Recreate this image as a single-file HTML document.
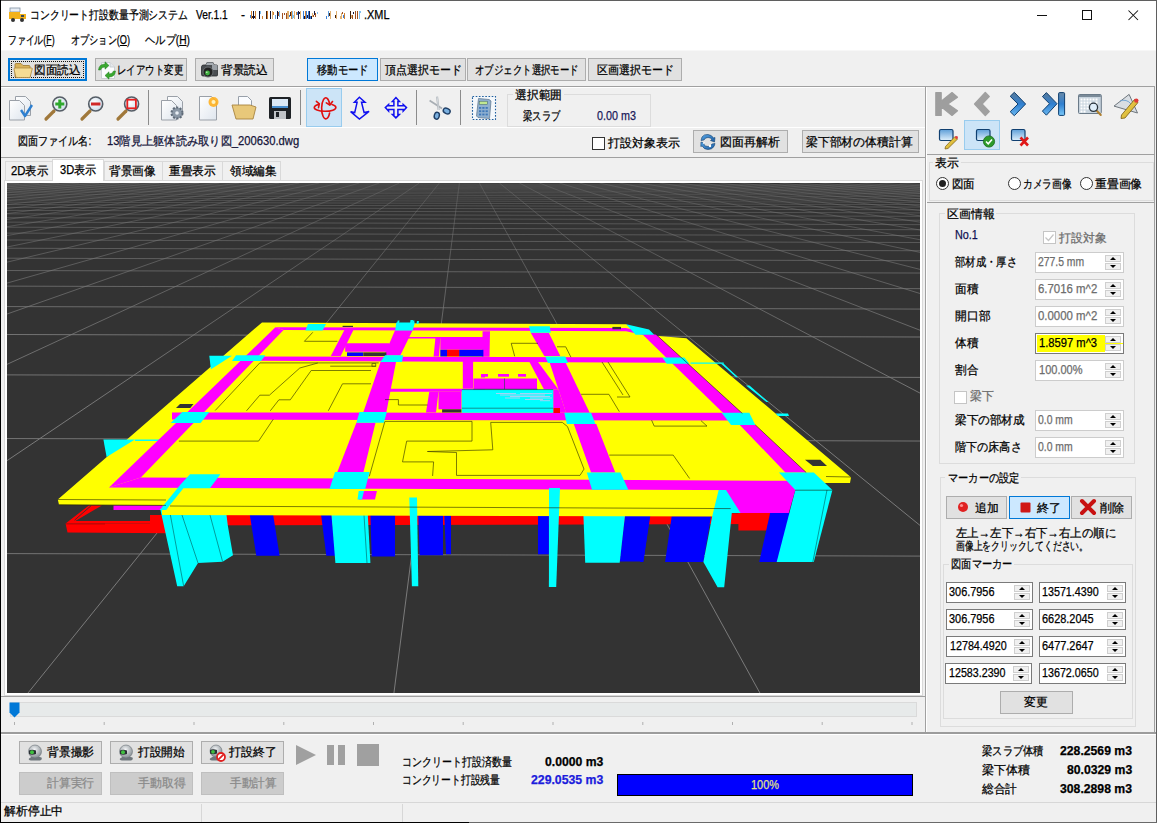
<!DOCTYPE html>
<html><head><meta charset="utf-8">
<style>
*{box-sizing:border-box}
html,body{margin:0;padding:0}
body{width:1157px;height:823px;overflow:hidden;position:relative;background:#f0f0f0;font-family:"Liberation Sans",sans-serif;font-size:12px;color:#000}
.a{position:absolute}
.t{position:absolute;z-index:3;white-space:nowrap;line-height:14px;font-size:12px;-webkit-text-stroke-width:0.25px}
.btn{position:absolute;background:#e1e1e1;border:1px solid #adadad;display:flex;align-items:center;justify-content:center;white-space:nowrap;font-size:12px}
.hl{background:#cce8ff;border-color:#0078d7}
.dis{background:#cccccc;border-color:#bfbfbf;color:#838383}
.inp{position:absolute;background:#fff;border:1px solid #7a7a7a;height:21px}
.inp.d{border-color:#cccccc;color:#6d6d6d}
.inp span{position:absolute;left:3px;top:3px;white-space:nowrap;font-size:12px;line-height:14px}
.sp{position:absolute;right:2px;top:2px;width:16px;height:15px;}
.sp i{position:absolute;left:0;width:16px;height:7px;background:#f0f0f0;border:1px solid #cfcfcf}
.sp i:nth-of-type(1){top:0}.sp i:nth-of-type(2){top:8px}
.sp b{position:absolute;left:5px;width:0;height:0;border-left:3px solid transparent;border-right:3px solid transparent}
.sp b.u{top:2px;border-bottom:3px solid #000}
.sp b.dn{top:10px;border-top:3px solid #000}
.grp{position:absolute;border:1px solid #dcdcdc}
.grp .gt{position:absolute;top:-8px;left:6px;background:#f0f0f0;padding:0 1px;white-space:nowrap;line-height:14px}
.sep{position:absolute;width:1px;background:#8c8c8c}
.tab{position:absolute;top:161px;height:19px;background:#f0f0f0;border:1px solid #d9d9d9;border-bottom:none;display:flex;align-items:center;justify-content:center;font-size:12px}
.radio{position:absolute;width:13px;height:13px;border-radius:50%;border:1px solid #333;background:#fff}
.chk{position:absolute;width:13px;height:13px;border:1px solid #333;background:#fff}
</style></head><body>
<!-- window frame -->
<div class="a" style="left:0;top:0;width:1157px;height:50px;background:#fff"></div>
<div class="a" style="left:0;top:0;width:1157px;height:1px;background:#5f5f5f;z-index:5"></div>
<div class="a" style="left:0;top:0;width:1px;height:823px;background:#000;z-index:5"></div>
<div class="a" style="left:1156px;top:0;width:1px;height:823px;background:#5f5f5f;z-index:5"></div>
<div class="a" style="left:0;top:822px;width:469px;height:1px;background:#000;z-index:5"></div>
<div class="a" style="left:469px;top:822px;width:688px;height:1px;background:#6a6a6a;z-index:5"></div>

<!-- title bar -->
<svg class="a" style="left:9px;top:7px" width="18" height="16" viewBox="0 0 18 16">
<rect x="1" y="1" width="10" height="4" fill="#e8eef5" stroke="#7f8fa0" stroke-width="0.8"/>
<rect x="0" y="5" width="11" height="7" fill="#f3b21a"/>
<rect x="11" y="7" width="6" height="5" fill="#f3b21a"/>
<rect x="12" y="8" width="3" height="2" fill="#3b4a5a"/>
<circle cx="4" cy="13" r="2" fill="#333"/><circle cx="13" cy="13" r="2" fill="#333"/>
</svg>
<div class="a" style="left:250px;top:9px;width:113px;height:10px;"><svg width="113" height="10"><rect x="0" y="5" width="1" height="3" fill="#3a7fd8"/><rect x="1" y="1" width="1" height="8" fill="#d08030"/><rect x="2" y="6" width="1" height="2" fill="#402010"/><rect x="3" y="1" width="1" height="8" fill="#101030"/><rect x="4" y="6" width="1" height="2" fill="#101030"/><rect x="5" y="1" width="1" height="8" fill="#d08030"/><rect x="9" y="1" width="1" height="8" fill="#101030"/><rect x="10" y="1" width="1" height="3" fill="#80c0f0"/><rect x="12" y="6" width="1" height="3" fill="#d08030"/><rect x="16" y="1" width="1" height="8" fill="#402010"/><rect x="17" y="1" width="1" height="8" fill="#d08030"/><rect x="20" y="1" width="1" height="8" fill="#101030"/><rect x="22" y="1" width="1" height="8" fill="#e0b070"/><rect x="23" y="2" width="1" height="3" fill="#d08030"/><rect x="25" y="5" width="1" height="4" fill="#60a0e0"/><rect x="27" y="1" width="1" height="8" fill="#101030"/><rect x="28" y="2" width="1" height="4" fill="#a05020"/><rect x="29" y="1" width="1" height="6" fill="#80c0f0"/><rect x="32" y="3" width="1" height="6" fill="#a05020"/><rect x="34" y="3" width="1" height="2" fill="#a05020"/><rect x="36" y="3" width="1" height="6" fill="#a05020"/><rect x="37" y="1" width="1" height="8" fill="#e0b070"/><rect x="38" y="1" width="1" height="8" fill="#e0b070"/><rect x="39" y="5" width="1" height="2" fill="#3a7fd8"/><rect x="40" y="2" width="1" height="4" fill="#402010"/><rect x="41" y="1" width="1" height="8" fill="#d08030"/><rect x="42" y="1" width="1" height="8" fill="#80c0f0"/><rect x="43" y="5" width="1" height="3" fill="#80c0f0"/><rect x="44" y="1" width="1" height="8" fill="#e0b070"/><rect x="46" y="2" width="1" height="3" fill="#d08030"/><rect x="47" y="2" width="1" height="3" fill="#3a7fd8"/><rect x="48" y="1" width="1" height="8" fill="#1a1a40"/><rect x="49" y="2" width="1" height="2" fill="#101030"/><rect x="50" y="1" width="1" height="8" fill="#e0b070"/><rect x="53" y="1" width="1" height="8" fill="#3a7fd8"/><rect x="54" y="6" width="1" height="3" fill="#101030"/><rect x="55" y="1" width="1" height="8" fill="#d08030"/><rect x="56" y="1" width="1" height="8" fill="#3a7fd8"/><rect x="57" y="5" width="1" height="3" fill="#1a1a40"/><rect x="58" y="1" width="1" height="8" fill="#3a7fd8"/><rect x="59" y="1" width="1" height="8" fill="#1a1a40"/><rect x="60" y="6" width="1" height="3" fill="#3a7fd8"/><rect x="61" y="6" width="1" height="3" fill="#101030"/><rect x="62" y="3" width="1" height="4" fill="#e0b070"/><rect x="63" y="5" width="1" height="2" fill="#a05020"/><rect x="64" y="1" width="1" height="4" fill="#1a1a40"/><rect x="65" y="3" width="1" height="4" fill="#a05020"/><rect x="67" y="2" width="1" height="2" fill="#80c0f0"/><rect x="76" y="6" width="1" height="3" fill="#3a7fd8"/><rect x="78" y="1" width="1" height="6" fill="#60a0e0"/><rect x="79" y="3" width="1" height="3" fill="#402010"/><rect x="80" y="1" width="1" height="8" fill="#e0b070"/><rect x="85" y="5" width="1" height="3" fill="#402010"/><rect x="86" y="1" width="1" height="8" fill="#e0b070"/><rect x="90" y="6" width="1" height="3" fill="#e0b070"/><rect x="91" y="3" width="1" height="6" fill="#e0b070"/><rect x="92" y="2" width="1" height="2" fill="#a05020"/><rect x="93" y="5" width="1" height="3" fill="#3a7fd8"/><rect x="94" y="3" width="1" height="6" fill="#d08030"/><rect x="100" y="1" width="1" height="8" fill="#402010"/><rect x="101" y="5" width="1" height="3" fill="#e0b070"/><rect x="102" y="5" width="1" height="4" fill="#a05020"/><rect x="103" y="2" width="1" height="2" fill="#1a1a40"/><rect x="105" y="1" width="1" height="8" fill="#a05020"/><rect x="107" y="1" width="1" height="8" fill="#a05020"/><rect x="109" y="1" width="1" height="8" fill="#80c0f0"/><rect x="110" y="1" width="1" height="2" fill="#80c0f0"/></svg></div>
<div class="a" style="left:1037px;top:15px;width:10px;height:1px;background:#111"></div>
<div class="a" style="left:1082px;top:10px;width:10px;height:10px;border:1px solid #111"></div>
<svg class="a" style="left:1127px;top:9px" width="13" height="13"><path d="M1.5 1.5L11 11M11 1.5L1.5 11" stroke="#111" stroke-width="1.05"/></svg>

<!-- menu -->
<div class="a" style="left:1px;top:50px;width:1155px;height:1px;background:#f7f7f7"></div>

<!-- toolbar 1 -->
<div class="btn" style="left:8px;top:58px;width:79px;height:23px;border:2px solid #0078d7;padding-left:18px"></div>
<div class="a" style="left:11px;top:61px;width:73px;height:17px;border:1px dotted #111"></div>
<svg class="a" style="left:13px;top:61px;z-index:1" width="20" height="19" viewBox="0 0 20 19"><path d="M2 3.5 Q2 2.5 3 2.5 H8 L10 4.5 H16 Q17 4.5 17 5.5 V16 H2 Z" fill="#d9b25a" stroke="#a07a30" stroke-width="0.8"/><path d="M1 8 Q1 7 2 7 H18.5 Q19.5 7 19.2 8 L17 16.5 H3 Z" fill="#f6dc94" stroke="#b08a40" stroke-width="0.8"/></svg>
<div class="btn" style="left:95px;top:58px;width:92px;height:23px;padding-left:20px"></div>
<svg class="a" style="left:97px;top:61px;z-index:1" width="20" height="19" viewBox="0 0 20 19"><path d="M4.5 1.5 H13 L17.5 6 V17.5 H4.5 Z" fill="#fbfcfd" stroke="#c0c6cc" stroke-width="0.8"/><path d="M13 1.5 V6 H17.5" fill="#e4e8ec" stroke="#c0c6cc" stroke-width="0.8"/><path d="M1.5 9 Q2 3 8 3 L8 0.8 L12 4.5 L8 8.2 L8 6 Q4.5 6 3.5 9 Z" fill="#3aa830" stroke="#1f7a1f" stroke-width="0.5"/><path d="M18.5 10 Q18 16 12 16 L12 18.2 L8 14.5 L12 10.8 L12 13 Q15.5 13 16.5 10 Z" fill="#3aa830" stroke="#1f7a1f" stroke-width="0.5"/></svg>
<div class="btn" style="left:195px;top:58px;width:79px;height:23px;padding-left:20px"></div>
<svg class="a" style="left:200px;top:61px;z-index:1" width="19" height="18" viewBox="0 0 19 18"><path d="M7 1.5 H13 L14 4 H16.5 Q17.5 4 17.5 5 V14 Q17.5 15 16.5 15 H3 Q1.5 15 1.5 13.5 V6 Q1.5 4 3.5 4 H6 Z" fill="#4a4e52" stroke="#2a2c2e" stroke-width="0.8"/><path d="M7 1.5 H13 L14 4 H6 Z" fill="#a8aeb4"/><path d="M12 4 H16.5 Q17.5 4 17.5 5 V9 H12 Z" fill="#9aa0a6"/><circle cx="8" cy="11" r="5" fill="#222" stroke="#6a6e72" stroke-width="1"/><circle cx="7.5" cy="12" r="2.4" fill="#3fb040"/><circle cx="6.8" cy="11.2" r="0.8" fill="#c8f0c0"/></svg>

<div class="btn hl" style="left:307px;top:58px;width:71px;height:23px"></div>
<div class="btn" style="left:380px;top:58px;width:86px;height:23px"></div>
<div class="btn" style="left:467px;top:58px;width:119px;height:23px"></div>
<div class="btn" style="left:588px;top:58px;width:94px;height:23px"></div>
<div class="a" style="left:1px;top:86px;width:924px;height:1px;background:#a0a0a0"></div>
<div class="a" style="left:1px;top:87px;width:924px;height:1px;background:#fff"></div>

<!-- toolbar 2 -->
<div class="a" style="left:306px;top:88px;width:36px;height:39px;background:#cce4f7;border:1px solid #99ccee"></div>
<div class="sep" style="left:148px;top:90px;height:35px"></div>
<div class="sep" style="left:300px;top:90px;height:35px"></div>
<div class="sep" style="left:416px;top:90px;height:35px"></div>
<div class="sep" style="left:460px;top:90px;height:35px"></div>
<svg class="a" style="left:0;top:88px;z-index:1" width="520" height="38" viewBox="0 88 520 38">
<defs>
<linearGradient id="pg" x1="0" y1="0" x2="1" y2="1"><stop offset="0" stop-color="#ffffff"/><stop offset="1" stop-color="#dfe6ee"/></linearGradient>
<radialGradient id="lens" cx="0.4" cy="0.4" r="0.7"><stop offset="0" stop-color="#ffffff"/><stop offset="1" stop-color="#c8d8e8"/></radialGradient>
</defs>
<!-- 1 doc check -->
<path d="M15.5 96.5h10l5 5v14h-15z" fill="url(#pg)" stroke="#9aa0a8"/>
<path d="M9.5 100.5h10l5 5v14.5h-15z" fill="url(#pg)" stroke="#9aa0a8"/>
<path d="M21 110l4 6l7-11" stroke="#2d7fd0" stroke-width="2.4" fill="none" stroke-linejoin="round"/>
<!-- 2 zoom + -->
<path d="M46 119l8-8" stroke="#a0783a" stroke-width="3.2" stroke-linecap="round"/>
<circle cx="59.8" cy="104" r="7" fill="url(#lens)" stroke="#555d66" stroke-width="1.6"/>
<path d="M59.8 99.5v9M55.3 104h9" stroke="#2ea82e" stroke-width="3"/>
<!-- 3 zoom - -->
<path d="M82 119l8-8" stroke="#a0783a" stroke-width="3.2" stroke-linecap="round"/>
<circle cx="95.7" cy="104" r="7" fill="url(#lens)" stroke="#555d66" stroke-width="1.6"/>
<path d="M91 104h9.4" stroke="#d02828" stroke-width="3"/>
<!-- 4 zoom box -->
<path d="M118 119l8-8" stroke="#a0783a" stroke-width="3.2" stroke-linecap="round"/>
<circle cx="131.6" cy="104" r="7" fill="url(#lens)" stroke="#555d66" stroke-width="1.6"/>
<rect x="127.3" y="99.7" width="8.6" height="8.6" fill="none" stroke="#e82020" stroke-width="1.8"/>
<!-- 5 doc gear -->
<path d="M167.5 96.5h10l5 5v14h-15z" fill="url(#pg)" stroke="#9aa0a8"/>
<path d="M161.5 100.5h10l5 5v14.5h-15z" fill="url(#pg)" stroke="#9aa0a8"/>
<circle cx="177" cy="113" r="5.5" fill="#8b98a6" stroke="#5f6b78" stroke-width="2" stroke-dasharray="2 1.5"/>
<circle cx="177" cy="113" r="1.8" fill="#e8eef4"/>
<!-- 6 new doc -->
<path d="M199.5 96.5h12l5 5v18.5h-17z" fill="url(#pg)" stroke="#9aa0a8"/>
<circle cx="213.5" cy="102" r="5" fill="#ffb020" opacity="0.9"/><circle cx="213.5" cy="102" r="2" fill="#fff3c0"/>
<!-- 7 folder -->
<path d="M238.5 96.5h9l4 4v14h-13z" fill="#fafcff" stroke="#98a0aa"/>
<path d="M232 105h18l6 2l-3 12h-17z" fill="#e8c87a" stroke="#a88440" stroke-width="0.9"/>
<!-- 8 floppy -->
<rect x="269" y="97" width="22" height="22" rx="1.5" fill="#1e2226"/>
<rect x="272" y="99" width="16" height="9" fill="#dce9f5"/><rect x="272" y="106" width="16" height="2" fill="#4a90d0"/>
<rect x="274" y="111" width="12" height="8" fill="#c0c4c8"/><rect x="276" y="112" width="3" height="5" fill="#1e2226"/>
<!-- 9 rotate -->
<g fill="none" stroke="#e01010" stroke-width="1.6" stroke-linecap="round" stroke-linejoin="round">
<path d="M329.6 113 A4.2 10.5 0 1 1 329.8 104.8"/>
<path d="M318.5 104.5 A10.8 3.8 0 1 0 332 104.6"/>
<path d="M326.3 102.9 L329.8 105 L332.5 101.5"/>
<path d="M316.4 101.3 L319.3 103.9 L318.5 107.6"/>
</g>
<!-- 10 up-down arrow -->
<path d="M359.4 97.3 L365 102.3 L361.5 102.3 L364.1 112.6 L369.1 111.4 L359.4 119 L350.6 111.7 L354.7 112.6 L357.1 102.3 L354.4 102.3 Z" fill="none" stroke="#1010f0" stroke-width="1.5" stroke-linejoin="miter"/>
<!-- 11 move arrows -->
<path d="M395.9 97.6 L399.4 101.4 L397.9 101.4 L397.9 105.8 L403.2 105.8 L403.2 104.4 L406.5 107.6 L403.2 111.1 L403.2 109.4 L397.9 109.4 L397.9 114.4 L399.4 114.4 L395.9 117.9 L392.4 114.4 L393.9 114.4 L393.9 109.4 L388.6 109.4 L388.6 111.1 L385.3 107.6 L388.6 104.4 L388.6 105.8 L393.9 105.8 L393.9 101.4 L392.4 101.4 Z" fill="none" stroke="#1010f0" stroke-width="1.5" stroke-linejoin="miter"/>
<!-- 12 scissors -->
<path d="M437.1 96.6 L438.6 110" stroke="#a8aeb4" stroke-width="2"/>
<path d="M429.6 100.5 L442 108.5" stroke="#a8aeb4" stroke-width="1.8"/>
<path d="M437.1 96.6 L438.6 110" stroke="#e8ecf0" stroke-width="0.7"/>
<ellipse cx="446.7" cy="111" rx="3.6" ry="2.6" fill="#7ab0e0" stroke="#1f3f66" stroke-width="1.4" transform="rotate(25 446.7 111)"/>
<ellipse cx="436.8" cy="115.7" rx="2.5" ry="3.5" fill="#7ab0e0" stroke="#1f3f66" stroke-width="1.4" transform="rotate(15 436.8 115.7)"/>
<!-- 13 calculator -->
<rect x="472.5" y="96.5" width="23" height="23" fill="#f4f8fc" stroke="#1f5f9f" stroke-width="1.1" stroke-dasharray="1.6 1.6"/>
<path d="M478.5 98.5 L489 99.5 L491 101 L489.5 118.5 L478 117.5 L476.5 116 Z" fill="#8fb0d0" stroke="#6a7f94" stroke-width="0.8"/>
<rect x="479.2" y="101.2" width="8.2" height="3.3" fill="#c0e890" stroke="#3a5a70" stroke-width="0.5"/>
<g fill="#3f78b8"><rect x="479" y="107" width="2.2" height="1.8"/><rect x="482.3" y="107" width="2.2" height="1.8"/><rect x="485.6" y="107" width="2.2" height="1.8"/><rect x="479" y="110.3" width="2.2" height="1.8"/><rect x="482.3" y="110.3" width="2.2" height="1.8"/><rect x="485.6" y="110.3" width="2.2" height="1.8"/><rect x="479" y="113.6" width="2.2" height="1.8"/><rect x="482.3" y="113.6" width="2.2" height="1.8"/><rect x="485.6" y="113.6" width="2.2" height="1.8"/></g>
</svg>

<div class="grp" style="left:507px;top:94px;width:144px;height:33px"></div>
<div class="a" style="left:1px;top:127px;width:924px;height:1px;background:#fff"></div>

<!-- file row -->
<div class="chk" style="left:592px;top:137px"></div>
<div class="btn" style="left:693px;top:130px;width:95px;height:23px;padding-left:20px"></div>
<svg class="a" style="left:699px;top:133px;z-index:1" width="18" height="18" viewBox="0 0 18 18"><defs><linearGradient id="rf" x1="0" y1="0" x2="1" y2="1"><stop offset="0" stop-color="#5aa8e8"/><stop offset="1" stop-color="#1a5aa0"/></linearGradient></defs><path d="M3 4 Q5 1 9 1.5 Q13 2 14.5 5 L16 4.5 L15.5 9 L11.5 7.5 L13 6.5 Q11.5 4.5 9 4.5 Q6 4.5 5 7 L2 7.5 Z" fill="url(#rf)" stroke="#10406f" stroke-width="0.6"/><path d="M15 13.5 Q13 16.5 9 16.5 Q5 16.5 3.2 13 L1.8 13.5 L2 9 L6 10.5 L4.8 11.5 Q6.2 13.5 9 13.5 Q12 13.5 13 11 L16 10.5 Z" fill="url(#rf)" stroke="#10406f" stroke-width="0.6"/><circle cx="5" cy="10" r="1" fill="#fff"/><circle cx="11" cy="13" r="1.2" fill="#fff"/></svg>
<div class="btn" style="left:802px;top:130px;width:117px;height:23px"></div>
<div class="a" style="left:1px;top:157px;width:924px;height:1px;background:#a0a0a0"></div>

<!-- tabs -->
<div class="tab" style="left:5px;width:48px"></div>
<div class="tab" style="left:104px;width:59px"></div>
<div class="tab" style="left:162px;width:61px"></div>
<div class="tab" style="left:222px;width:59px"></div>
<div class="a" style="left:4px;top:180px;width:919px;height:516px;background:#fff;border:1px solid #d9d9d9"></div>
<div class="tab" style="left:52px;top:159px;width:52px;height:22px;background:#fff;border-color:#d9d9d9;z-index:2"></div>

<!-- 3D view -->
<svg class="a" style="left:7px;top:183px" width="913" height="510" viewBox="7 183 913 510">
<defs><linearGradient id="vg" gradientUnits="userSpaceOnUse" x1="0" y1="183" x2="0" y2="420"><stop offset="0" stop-color="#7a7a7a" stop-opacity="0.35"/><stop offset="1" stop-color="#7a7a7a" stop-opacity="1"/></linearGradient></defs>
<rect x="7" y="183" width="913" height="510" fill="#333333"/>
<g stroke="#7a7a7a" stroke-width="1" fill="none">
<line x1="0" y1="553.57" x2="1157" y2="556.75" stroke-opacity="0.90"/>
<line x1="0" y1="438.50" x2="1157" y2="441.68" stroke-opacity="0.90"/>
<line x1="0" y1="374.86" x2="1157" y2="378.04" stroke-opacity="0.90"/>
<line x1="0" y1="334.47" x2="1157" y2="337.65" stroke-opacity="0.90"/>
<line x1="0" y1="306.56" x2="1157" y2="309.74" stroke-opacity="0.79"/>
<line x1="0" y1="286.12" x2="1157" y2="289.30" stroke-opacity="0.72"/>
<line x1="0" y1="270.50" x2="1157" y2="273.68" stroke-opacity="0.66"/>
<line x1="0" y1="258.18" x2="1157" y2="261.36" stroke-opacity="0.62"/>
<line x1="0" y1="248.21" x2="1157" y2="251.39" stroke-opacity="0.58"/>
<line x1="0" y1="239.98" x2="1157" y2="243.16" stroke-opacity="0.56"/>
<line x1="0" y1="233.07" x2="1157" y2="236.25" stroke-opacity="0.53"/>
<line x1="0" y1="227.18" x2="1157" y2="230.36" stroke-opacity="0.51"/>
<line x1="0" y1="222.11" x2="1157" y2="225.29" stroke-opacity="0.49"/>
<line x1="0" y1="217.69" x2="1157" y2="220.87" stroke-opacity="0.48"/>
<line x1="0" y1="213.81" x2="1157" y2="216.99" stroke-opacity="0.46"/>
<line x1="0" y1="210.37" x2="1157" y2="213.55" stroke-opacity="0.45"/>
<line x1="0" y1="207.31" x2="1157" y2="210.49" stroke-opacity="0.44"/>
<line x1="0" y1="204.56" x2="1157" y2="207.74" stroke-opacity="0.43"/>
<line x1="0" y1="202.08" x2="1157" y2="205.26" stroke-opacity="0.42"/>
<line x1="0" y1="199.83" x2="1157" y2="203.01" stroke-opacity="0.41"/>
<line x1="0" y1="197.78" x2="1157" y2="200.96" stroke-opacity="0.40"/>
<line x1="0" y1="195.90" x2="1157" y2="199.08" stroke-opacity="0.39"/>
<line x1="0" y1="194.18" x2="1157" y2="197.36" stroke-opacity="0.38"/>
<line x1="0" y1="192.59" x2="1157" y2="195.77" stroke-opacity="0.37"/>
<line x1="0" y1="191.13" x2="1157" y2="194.31" stroke-opacity="0.36"/>
<line x1="0" y1="189.77" x2="1157" y2="192.95" stroke-opacity="0.36"/>
<line x1="0" y1="188.50" x2="1157" y2="191.68" stroke-opacity="0.35"/>
<line x1="0" y1="187.32" x2="1157" y2="190.50" stroke-opacity="0.34"/>
<line x1="0" y1="186.22" x2="1157" y2="189.40" stroke-opacity="0.33"/>
<line x1="0" y1="185.19" x2="1157" y2="188.37" stroke-opacity="0.32"/>
<line x1="0" y1="184.22" x2="1157" y2="187.40" stroke-opacity="0.30"/>
<line x1="0" y1="183.31" x2="1157" y2="186.49" stroke-opacity="0.30"/>
<line x1="0" y1="182.45" x2="1157" y2="185.64" stroke-opacity="0.30"/>
<line x1="-361.06" y1="183" x2="-14889.76" y2="703" stroke="url(#vg)"/>
<line x1="-341.05" y1="183" x2="-14517.02" y2="703" stroke="url(#vg)"/>
<line x1="-321.04" y1="183" x2="-14144.27" y2="703" stroke="url(#vg)"/>
<line x1="-301.03" y1="183" x2="-13771.53" y2="703" stroke="url(#vg)"/>
<line x1="-281.02" y1="183" x2="-13398.79" y2="703" stroke="url(#vg)"/>
<line x1="-261.01" y1="183" x2="-13026.05" y2="703" stroke="url(#vg)"/>
<line x1="-241.00" y1="183" x2="-12653.31" y2="703" stroke="url(#vg)"/>
<line x1="-220.99" y1="183" x2="-12280.57" y2="703" stroke="url(#vg)"/>
<line x1="-200.98" y1="183" x2="-11907.82" y2="703" stroke="url(#vg)"/>
<line x1="-180.97" y1="183" x2="-11535.08" y2="703" stroke="url(#vg)"/>
<line x1="-160.96" y1="183" x2="-11162.34" y2="703" stroke="url(#vg)"/>
<line x1="-140.95" y1="183" x2="-10789.60" y2="703" stroke="url(#vg)"/>
<line x1="-120.94" y1="183" x2="-10416.86" y2="703" stroke="url(#vg)"/>
<line x1="-100.92" y1="183" x2="-10044.12" y2="703" stroke="url(#vg)"/>
<line x1="-80.91" y1="183" x2="-9671.38" y2="703" stroke="url(#vg)"/>
<line x1="-60.90" y1="183" x2="-9298.63" y2="703" stroke="url(#vg)"/>
<line x1="-40.89" y1="183" x2="-8925.89" y2="703" stroke="url(#vg)"/>
<line x1="-20.88" y1="183" x2="-8553.15" y2="703" stroke="url(#vg)"/>
<line x1="-0.87" y1="183" x2="-8180.41" y2="703" stroke="url(#vg)"/>
<line x1="19.14" y1="183" x2="-7807.67" y2="703" stroke="url(#vg)"/>
<line x1="39.15" y1="183" x2="-7434.93" y2="703" stroke="url(#vg)"/>
<line x1="59.16" y1="183" x2="-7062.18" y2="703" stroke="url(#vg)"/>
<line x1="79.17" y1="183" x2="-6689.44" y2="703" stroke="url(#vg)"/>
<line x1="99.18" y1="183" x2="-6316.70" y2="703" stroke="url(#vg)"/>
<line x1="119.19" y1="183" x2="-5943.96" y2="703" stroke="url(#vg)"/>
<line x1="139.20" y1="183" x2="-5571.22" y2="703" stroke="url(#vg)"/>
<line x1="159.21" y1="183" x2="-5198.48" y2="703" stroke="url(#vg)"/>
<line x1="179.22" y1="183" x2="-4825.73" y2="703" stroke="url(#vg)"/>
<line x1="199.24" y1="183" x2="-4452.99" y2="703" stroke="url(#vg)"/>
<line x1="219.25" y1="183" x2="-4080.25" y2="703" stroke="url(#vg)"/>
<line x1="239.26" y1="183" x2="-3707.51" y2="703" stroke="url(#vg)"/>
<line x1="259.27" y1="183" x2="-3334.77" y2="703" stroke="url(#vg)"/>
<line x1="279.28" y1="183" x2="-2962.03" y2="703" stroke="url(#vg)"/>
<line x1="299.29" y1="183" x2="-2589.28" y2="703" stroke="url(#vg)"/>
<line x1="319.30" y1="183" x2="-2216.54" y2="703" stroke="url(#vg)"/>
<line x1="339.31" y1="183" x2="-1843.80" y2="703" stroke="url(#vg)"/>
<line x1="359.32" y1="183" x2="-1471.06" y2="703" stroke="url(#vg)"/>
<line x1="379.33" y1="183" x2="-1098.32" y2="703" stroke="url(#vg)"/>
<line x1="399.34" y1="183" x2="-725.58" y2="703" stroke="url(#vg)"/>
<line x1="419.35" y1="183" x2="-352.83" y2="703" stroke="url(#vg)"/>
<line x1="439.36" y1="183" x2="19.91" y2="703" stroke="url(#vg)"/>
<line x1="459.37" y1="183" x2="392.65" y2="703" stroke="url(#vg)"/>
<line x1="479.39" y1="183" x2="765.39" y2="703" stroke="url(#vg)"/>
<line x1="499.40" y1="183" x2="1138.13" y2="703" stroke="url(#vg)"/>
<line x1="519.41" y1="183" x2="1510.87" y2="703" stroke="url(#vg)"/>
<line x1="539.42" y1="183" x2="1883.61" y2="703" stroke="url(#vg)"/>
<line x1="559.43" y1="183" x2="2256.36" y2="703" stroke="url(#vg)"/>
<line x1="579.44" y1="183" x2="2629.10" y2="703" stroke="url(#vg)"/>
<line x1="599.45" y1="183" x2="3001.84" y2="703" stroke="url(#vg)"/>
<line x1="619.46" y1="183" x2="3374.58" y2="703" stroke="url(#vg)"/>
<line x1="639.47" y1="183" x2="3747.32" y2="703" stroke="url(#vg)"/>
<line x1="659.48" y1="183" x2="4120.06" y2="703" stroke="url(#vg)"/>
<line x1="679.49" y1="183" x2="4492.81" y2="703" stroke="url(#vg)"/>
<line x1="699.50" y1="183" x2="4865.55" y2="703" stroke="url(#vg)"/>
<line x1="719.51" y1="183" x2="5238.29" y2="703" stroke="url(#vg)"/>
<line x1="739.52" y1="183" x2="5611.03" y2="703" stroke="url(#vg)"/>
<line x1="759.54" y1="183" x2="5983.77" y2="703" stroke="url(#vg)"/>
<line x1="779.55" y1="183" x2="6356.51" y2="703" stroke="url(#vg)"/>
<line x1="799.56" y1="183" x2="6729.26" y2="703" stroke="url(#vg)"/>
<line x1="819.57" y1="183" x2="7102.00" y2="703" stroke="url(#vg)"/>
<line x1="839.58" y1="183" x2="7474.74" y2="703" stroke="url(#vg)"/>
<line x1="859.59" y1="183" x2="7847.48" y2="703" stroke="url(#vg)"/>
<line x1="879.60" y1="183" x2="8220.22" y2="703" stroke="url(#vg)"/>
<line x1="899.61" y1="183" x2="8592.96" y2="703" stroke="url(#vg)"/>
<line x1="919.62" y1="183" x2="8965.71" y2="703" stroke="url(#vg)"/>
<line x1="939.63" y1="183" x2="9338.45" y2="703" stroke="url(#vg)"/>
<line x1="959.64" y1="183" x2="9711.19" y2="703" stroke="url(#vg)"/>
<line x1="979.65" y1="183" x2="10083.93" y2="703" stroke="url(#vg)"/>
<line x1="999.66" y1="183" x2="10456.67" y2="703" stroke="url(#vg)"/>
<line x1="1019.67" y1="183" x2="10829.41" y2="703" stroke="url(#vg)"/>
<line x1="1039.68" y1="183" x2="11202.16" y2="703" stroke="url(#vg)"/>
<line x1="1059.70" y1="183" x2="11574.90" y2="703" stroke="url(#vg)"/>
<line x1="1079.71" y1="183" x2="11947.64" y2="703" stroke="url(#vg)"/>
<line x1="1099.72" y1="183" x2="12320.38" y2="703" stroke="url(#vg)"/>
<line x1="1119.73" y1="183" x2="12693.12" y2="703" stroke="url(#vg)"/>
<line x1="1139.74" y1="183" x2="13065.86" y2="703" stroke="url(#vg)"/>
<line x1="1159.75" y1="183" x2="13438.61" y2="703" stroke="url(#vg)"/>
<line x1="1179.76" y1="183" x2="13811.35" y2="703" stroke="url(#vg)"/>
<line x1="1199.77" y1="183" x2="14184.09" y2="703" stroke="url(#vg)"/>
<line x1="1219.78" y1="183" x2="14556.83" y2="703" stroke="url(#vg)"/>
<line x1="1239.79" y1="183" x2="14929.57" y2="703" stroke="url(#vg)"/>
</g>
<g id="bld" stroke="none">
<!-- ===== red beams below ===== -->
<g fill="#ff0000">
<polygon points="65.6,523.5 170,523.5 170,533.3 67.5,532.6"/>
<polygon points="65.6,523.5 88.9,505.4 101.9,505.4 75.3,521 170,521 170,523.5"/>
<polygon points="150,515 822,513 822,524 150,525.4"/>
<polygon points="738.4,513 770.1,513 766.8,530.4 738.4,530.4"/>
</g>
<path d="M74.5,520.2 L91.1,505.7" stroke="#333" stroke-width="0.9" fill="none"/><path d="M65.6,524 L105,524" stroke="#a00000" stroke-width="0.6" fill="none"/>
<!-- ===== columns below ===== -->
<g fill="#0000ff">
<polygon points="249.8,515 273.2,515 279.6,555.7 256.3,555.7"/>
<polygon points="321.1,515 331.5,515 335.4,555.7 326.3,555.7"/>
<polygon points="370.4,515 395,515 395,556.5 371.7,556.5"/>
<polygon points="418.3,515 443,515 443,555.2 419.6,555.2"/>
<polygon points="444.3,515 451,515 451,554.3 446,554.3"/>
<polygon points="538,510.8 548.9,510.8 548.9,554.3 538,554.3"/>
<polygon points="625.1,514.4 650.5,514.4 643.3,561.6 619.7,561.6"/>
<polygon points="640,516 649.8,516 643.3,562.1 640,562.1"/>
<polygon points="671.7,516.2 711,516.2 703.4,562.1 665.1,562.1"/>
<polygon points="770.1,513 790.9,513 777.8,562.1 759.2,562.1"/>
</g>
<g fill="#00ffff">
<polygon points="160.4,509.8 226.5,515 227.8,525.4 233,555.2 222.6,561.7 198,563 183.7,586.3 177.2,586.3"/>
<polygon points="331.5,515 367.8,515 370.4,563 335.4,563"/>
<polygon points="583.4,514.4 625.1,514.4 619.7,562.7 585.2,562.7"/>
<polygon points="795.3,490 832.4,490 813.8,562.1 776.7,562.1"/>
</g>
<g stroke="#005a5a" stroke-width="0.6" fill="none">
<path d="M169.4,509.8 L183.7,586.3 M182,515 L198,563 M210,515 L222.6,561.7 M364,515 L367,563 M827,490 L812.8,562.1"/>
</g>
<!-- ===== slab ===== -->
<g fill="#ffff00">
<polygon points="262,322.4 626.2,324.3 642.8,334.7 686.4,338.2 851,477.3 850,483 826,483 795,490 166,489 166,505.4 59,504.7 57.8,499.5"/>
<polygon points="162,488.3 730.7,489 730.7,516.5 162,515"/>
</g>
<!-- left wedges (columns visible beyond slab edge) -->
<g fill="#00ffff">
<polygon points="209.3,355.8 232,355.8 210.9,369.2"/>
<polygon points="103.4,439.5 135,439.5 106.6,457"/>
<polygon points="135,439.5 159.5,439.5 159.5,441 135,441"/>
</g>
<!-- magenta side faces under slab -->
<g fill="#ff00ff">
<polygon points="113.5,505.4 166,505.4 166,510 113.5,510"/>
<polygon points="718.7,490 795.3,490 788.7,513 739.5,513"/>
</g>
<!-- ===== magenta beams (top) ===== -->
<g fill="#ff00ff">
<polygon points="275.4,327.3 626,328 656.3,334.7 642.8,334.7 626,331.3 283.6,330"/>
<polygon points="404.4,337 483,337 483,338.4 404.4,338.4"/>
<polygon points="275.4,327.3 283.6,330 140.8,477.5 109,487.5"/>
<polygon points="642.8,334.7 656.3,334.7 742.4,413.5 723.7,413.5"/>
<polygon points="739.8,424.9 755.3,424.9 806.2,472.5 785.4,472.5"/>
<polygon points="109,487.5 140.8,477.5 793,480.8 795.3,490.5"/>
<polygon points="241,356.4 662.5,357.5 666.7,362.7 241,360.7"/>
<polygon points="388.6,388.7 485,388.7 485,391.7 388.6,391.7"/>
<polygon points="172,412.5 721.6,412.8 731,420.6 172,419.5"/>
<!-- V2 -->
<polygon points="395.1,330.3 412.6,330.3 400.3,355.6 384.1,355.6"/>
<polygon points="380.5,362 396,362 386.4,412 363.4,412"/>
<polygon points="356.4,422.8 375.5,422.8 362,478 335,478"/>
<!-- V1 -->
<polygon points="344.4,330 353.4,330 340.7,356 330.8,356"/>
<!-- V4 -->
<polygon points="530.7,332.8 548.9,333 560.3,356 544.3,356"/>
<polygon points="549.8,363 565.8,363 589.7,412.8 566,412.8"/>
<polygon points="573.8,424 596.3,424 615.3,472.4 591.1,472.4"/>
<!-- V5, V3 -->
<polygon points="482.6,331.3 490,331.3 489.5,356.7 482.2,356.7"/>
<polygon points="435.4,338 440.3,338 439,356.5 433.6,356.5"/>
<!-- V6, V7 -->
<polygon points="462.8,360.7 473.1,360.7 473.1,388.7 462.8,388.7"/>
<polygon points="528.8,360.7 537.1,360.7 558.4,389.4 544,389.4"/>
<polygon points="429.3,391.7 438.5,391.7 436,412.5 426,412.5"/>
<!-- boxes -->
<polygon points="345.2,343.3 389.3,343.3 389.3,351.7 345.2,351.7"/>
<polygon points="440.3,338 483.4,338 483.4,349.8 440.3,349.8"/>
<polygon points="473.5,378.5 537,378.5 537,389.4 473.5,389.4"/>
<polygon points="438.5,391.7 461.5,391.7 461.5,409.3 438.5,409.3"/>
<polygon points="553.2,389.4 558.4,389.4 566.1,412.8 553.2,412.8"/>
<polygon points="481,374 485,374 485,377.5 481,377.5"/>
<polygon points="363.9,490.9 376.9,490.9 375,499.4 358.7,499.4"/>
</g>
<g fill="#0000ff">
<polygon points="347,352.4 363.4,352.4 363.4,356 347,356"/>
<polygon points="440.3,349.8 447,349.8 447,356.5 440.3,356.5"/>
<polygon points="459.1,349.8 483.4,349.8 483.4,356.5 459.1,356.5"/>
</g>
<g fill="#ff0000">
<polygon points="447,349.8 459.1,349.8 459.1,356.5 447,356.5"/>
<polygon points="553.4,408 560,408 560,413 553.4,413"/>
</g>
<g fill="#333333">
<polygon points="363.4,352.4 386.4,352.4 386.4,356 363.4,356"/>
<polygon points="442.1,409.3 461.5,409.3 461.5,412.5 442.1,412.5"/>
<polygon points="805,459.8 820.4,459.8 827,466 812.8,466"/>
<polygon points="180,404 193.5,404 190.3,408 176,408"/>
<polygon points="612.4,326.9 621,326.9 621,329.3 612.4,329.3"/>
</g>
<!-- cyan block + caps -->
<g fill="#00ffff">
<polygon points="461.8,389.4 553.2,389.4 553.2,412.8 461.8,412.8"/>
<polygon points="308,324 326,324 322.6,330.4 305.4,330.4"/>
<polygon points="396.3,322.6 414.9,322.6 412.7,330.5 395.2,330.5"/>
<polygon points="529,326.3 549.8,326.3 550.7,332.8 530.7,332.8"/>
<polygon points="626.2,324.3 649,329.5 654.2,334.7 635.6,334.7"/>
<polygon points="236,355.3 265.4,355.3 261,361 232,361"/>
<polygon points="385,355.2 403.2,355.2 402,362 380.5,362"/>
<polygon points="545.2,356.4 565.2,356.4 568,363 548,363"/>
<polygon points="662.5,357.5 684.3,357.5 689.5,363.7 666.7,363.7"/>
<polygon points="182.4,411.9 209.3,411.9 200.6,423 170.6,423"/>
<polygon points="359.5,411.9 386.9,411.9 383.8,422.8 356.4,422.8"/>
<polygon points="564.3,412.8 591.1,412.8 595.4,424 566.9,424"/>
<polygon points="721.6,412.8 749.3,412.8 755.3,424.9 731.1,424.9"/>
<polygon points="190,474.2 220.4,474.2 209.9,488.3 183.4,488.3 169,506.2 166.3,510.1 159.7,510.1 180.3,484.8"/>
<polygon points="335,472 369.6,472 365.2,488.9 329.5,488.9"/>
<polygon points="586.8,472.4 620.5,472.4 628.3,489.7 592,489.7"/>
<polygon points="778.9,472.5 813.8,472.5 832.4,490 795.3,490"/>
<!-- corner column top at forward piece -->

<polygon points="358.7,491 364,491 362,499.4 357.5,499.4"/>
<!-- tall thin columns rising above slab -->
<polygon points="409.3,497.6 417,497.6 418.3,586.3 411.9,586.3"/>
<polygon points="549,488 560,488 556.2,587 548.9,587"/>
<polygon points="718.7,490 726,490 740.6,513 731.8,513 724.2,587.3 717.6,587.3 703.4,562.1 712.2,516.2"/>
</g>
<g fill="#d8c8f4" opacity="0.75">
<rect x="496" y="393" width="20" height="1"/><rect x="500" y="394.5" width="45" height="1"/><rect x="520" y="393" width="32" height="1"/><rect x="510" y="396" width="40" height="1"/><rect x="530" y="397.5" width="22" height="1"/><rect x="505" y="397.5" width="15" height="1"/><rect x="525" y="399" width="18" height="1"/><rect x="540" y="400.2" width="10" height="1"/>
</g>
<path d="M461.8,389.6 H553.2 M461.8,408.2 H553.2 M473.4,389.2 H537.6 M504.5,378.4 V389.4" stroke="#1a4a4a" stroke-width="0.6" fill="none"/>
<g fill="#ff00ff"><polygon points="481,374 488,374 488,376.7 481,376.7"/><polygon points="498,374 509,374 509,376.7 498,376.7"/><polygon points="518,374 526,374 526,376.7 518,376.7"/></g>
<g fill="#00ffff">
<polygon points="690.5,362.6 723.7,362.6 723.7,363.8 690.5,363.8"/>
<polygon points="721,363.5 723.5,363.5 738,377.2 736,377.2"/>
<polygon points="746,385.5 749.5,385.5 768.5,402.1 766.5,402.1"/>
<polygon points="775.6,413.6 788,413.6 789,416 778,416"/>
<polygon points="342.6,325.8 353,325.8 353,327 342.6,327" fill="#333"/>
<polygon points="397.7,320.5 399.5,320.5 399,323.5 397,323.5"/>
<polygon points="412.5,320.5 414.5,320.5 414,323.5 412,323.5"/>
<polygon points="410.5,320 413,320 412,327 409.5,327"/>
<polygon points="417,321 419,321 418.5,324 416.5,324"/>
</g>
<!-- ===== thin edge lines ===== -->
<g stroke="#1a1a00" stroke-width="0.7" fill="none" opacity="0.8">
<polyline points="57.8,499.5 166,500"/>
<polyline points="59,504.7 166,505.4"/>
<polyline points="170,506 730.7,508.6"/>

<polyline points="826,476.5 851,477"/>
<polyline points="795.3,490.2 832.4,490.2"/>
<polyline points="656.3,334.7 742.4,413.5"/>
<polyline points="755.3,424.9 806.2,472.5"/>
<!-- cell b -->
<polyline points="259.8,362.9 378.7,362.9"/>
<polyline points="259.8,362.9 215.2,410.5"/>
<polyline points="317.8,363 299.8,368 269.4,395.2 259.8,395.2 246.5,410.8"/>
<polyline points="311.2,370.5 371,370.5"/>
<polyline points="311.2,370.5 290.3,399.8 278.9,399.8 270.3,410.8"/>
<polyline points="342.5,383.8 371,383.8"/>
<polyline points="342.5,383.8 328.3,410.8"/>
<polyline points="330.2,366.2 375.8,366.2"/>
<rect x="372" y="363.7" width="3.8" height="2.5"/>
<!-- cell c -->
<polyline points="273.2,419.3 258.6,441.1 178.8,441.1"/>
<!-- cell d -->
<polyline points="384.9,421.4 369.3,476.4"/>
<polyline points="385,421.4 472,421.4 472,441.1 406.7,441.1 402.5,461.9 433.6,461.9 432.6,476"/>
<polyline points="490.7,422.4 562.3,422.4 567.5,426.6 584,469.1 580,475.4 456.5,475.4 456.5,452.5 427.4,451.5 492.8,449.8 490.7,422.4"/>
<!-- right of V4 below H2 -->
<polyline points="609.3,455.1 673.2,455.1 689.6,478.5"/>
<polyline points="651.6,420.2 654.2,426.1 707,426.1 700.9,420.6"/>
<!-- right cells -->
<polyline points="602,362 623,395"/>
<polyline points="608,362 630,397 617,397"/>
<polyline points="581.2,394.3 608.9,394.3 619.3,411.6"/>
<polyline points="511.2,343.3 538,343.3"/>
<polyline points="511.2,343.3 514.7,356.3"/>
<polyline points="557,346.8 565.7,346.8 570.9,357.2"/>
<polyline points="385,399.6 398.4,399.6 398.4,405 427.5,405"/>
<!-- top-left cell -->
<polyline points="312.8,332.3 304.4,341.3 337.4,341.3"/>
</g>
</g>

</svg>

<!-- slider -->
<div class="a" style="left:1px;top:696px;width:924px;height:1px;background:#a0a0a0"></div>
<div class="a" style="left:10px;top:702px;width:907px;height:15px;background:#e7eaea;border:1px solid #dadada"></div>
<svg class="a" style="left:9px;top:702px" width="11" height="16"><path d="M0.5 0.5h10v10l-5 5l-5-5z" fill="#0078d7"/></svg>
<svg class="a" style="left:0;top:719px" width="925" height="10"><g stroke="#b0b0b0"><line x1="14.5" y1="3" x2="14.5" y2="6"/><line x1="104.2" y1="3" x2="104.2" y2="6"/><line x1="194.0" y1="3" x2="194.0" y2="6"/><line x1="283.8" y1="3" x2="283.8" y2="6"/><line x1="373.5" y1="3" x2="373.5" y2="6"/><line x1="463.2" y1="3" x2="463.2" y2="6"/><line x1="553.0" y1="3" x2="553.0" y2="6"/><line x1="642.8" y1="3" x2="642.8" y2="6"/><line x1="732.5" y1="3" x2="732.5" y2="6"/><line x1="822.2" y1="3" x2="822.2" y2="6"/><line x1="912.0" y1="3" x2="912.0" y2="6"/></g></svg>

<!-- bottom panel -->
<div class="a" style="left:1px;top:732px;width:1155px;height:2px;background:#9c9c9c"></div>
<div class="a" style="left:1px;top:734px;width:1155px;height:1px;background:#fff"></div>
<div class="btn" style="left:19px;top:741px;width:83px;height:23px;padding-left:18px"></div>
<div class="btn" style="left:110px;top:741px;width:83px;height:23px;padding-left:18px"></div>
<div class="btn" style="left:201px;top:741px;width:83px;height:23px;padding-left:18px"></div>
<div class="btn dis" style="left:19px;top:772px;width:83px;height:23px;padding-left:18px"></div>
<div class="btn dis" style="left:110px;top:772px;width:83px;height:23px;padding-left:18px"></div>
<div class="btn dis" style="left:201px;top:772px;width:83px;height:23px;padding-left:18px"></div>
<svg class="a" style="left:26px;top:744px;z-index:1" width="18" height="18" viewBox="0 0 18 18"><defs><radialGradient id="wc26" cx="0.45" cy="0.35" r="0.7"><stop offset="0" stop-color="#f4f6f8"/><stop offset="1" stop-color="#7c848a"/></radialGradient></defs><path d="M3 14.5 Q6 11.5 10 12 L15.5 13.5 Q16.5 15.5 14 16.5 L5 16.5 Q2 16 3 14.5 Z" fill="#6e767c"/><circle cx="9" cy="7.5" r="6.5" fill="url(#wc26)" stroke="#6a7278" stroke-width="0.6"/><path d="M3 6.5 Q6 5 10 6.5 V10 Q6 11.5 3 10 Z" fill="#2a3034"/><circle cx="6" cy="8.3" r="2" fill="#3fc040"/></svg>
<svg class="a" style="left:117px;top:744px;z-index:1" width="18" height="18" viewBox="0 0 18 18"><defs><radialGradient id="wc117" cx="0.45" cy="0.35" r="0.7"><stop offset="0" stop-color="#f4f6f8"/><stop offset="1" stop-color="#7c848a"/></radialGradient></defs><path d="M3 14.5 Q6 11.5 10 12 L15.5 13.5 Q16.5 15.5 14 16.5 L5 16.5 Q2 16 3 14.5 Z" fill="#6e767c"/><circle cx="9" cy="7.5" r="6.5" fill="url(#wc117)" stroke="#6a7278" stroke-width="0.6"/><path d="M3 6.5 Q6 5 10 6.5 V10 Q6 11.5 3 10 Z" fill="#2a3034"/><circle cx="6" cy="8.3" r="2" fill="#3fc040"/></svg>
<svg class="a" style="left:208px;top:744px;z-index:1" width="18" height="18" viewBox="0 0 18 18"><defs><radialGradient id="wc3" cx="0.45" cy="0.35" r="0.7"><stop offset="0" stop-color="#f4f6f8"/><stop offset="1" stop-color="#7c848a"/></radialGradient></defs><path d="M2 14.5 Q5 11.5 9 12 L12 13 Q12 16 10 16.5 L4 16.5 Q1 16 2 14.5 Z" fill="#6e767c"/><circle cx="8" cy="7" r="6" fill="url(#wc3)" stroke="#6a7278" stroke-width="0.6"/><path d="M2 6 Q5 4.5 9 6 V9.5 Q5 11 2 9.5 Z" fill="#2a3034"/><circle cx="5" cy="7.8" r="1.9" fill="#3fc040"/><circle cx="13" cy="13" r="4" fill="#fff" stroke="#e02020" stroke-width="1.8"/><path d="M10.3 15.7 L15.7 10.3" stroke="#e02020" stroke-width="1.8"/></svg>
<svg class="a" style="left:295px;top:744px" width="90" height="22"><path d="M1 1L21 11L1 21z" fill="#a0a0a0"/><rect x="32" y="1" width="7" height="20" fill="#a0a0a0"/><rect x="43" y="1" width="7" height="20" fill="#a0a0a0"/><rect x="62" y="0" width="22" height="22" fill="#a0a0a0"/></svg>
<div class="a" style="left:617px;top:774px;width:296px;height:22px;background:#0000ff;border:1px solid #000"></div>

<!-- status bar -->
<div class="a" style="left:1px;top:802px;width:1155px;height:1px;background:#d7d7d7"></div>
<div class="a" style="left:201px;top:804px;width:1px;height:18px;background:#d7d7d7"></div>
<div class="a" style="left:402px;top:804px;width:1px;height:18px;background:#d7d7d7"></div>

<!-- right panel -->
<div class="a" style="left:925px;top:86px;width:1px;height:646px;background:#a0a0a0"></div>
<div class="a" style="left:926px;top:87px;width:1px;height:645px;background:#fff"></div>
<div class="a" style="left:1154px;top:86px;width:1px;height:646px;background:#a0a0a0"></div>
<div class="a" style="left:925px;top:86px;width:230px;height:1px;background:#a0a0a0"></div>
<div class="a" style="left:964px;top:120px;width:36px;height:30px;background:#cce4f7;border:1px solid #99ccee"></div>
<svg class="a" style="left:927px;top:88px;z-index:1" width="227" height="64" viewBox="927 88 227 64">
<defs><linearGradient id="bl" x1="0" y1="0" x2="0" y2="1"><stop offset="0" stop-color="#5a7a98"/><stop offset="0.5" stop-color="#2f7fd0"/><stop offset="1" stop-color="#6ab8f0"/></linearGradient>
<linearGradient id="blb" x1="0" y1="0" x2="0" y2="1"><stop offset="0" stop-color="#6a8aa8"/><stop offset="0.5" stop-color="#2f7fd0"/><stop offset="1" stop-color="#7ac8f8"/></linearGradient>
<linearGradient id="wn" x1="0" y1="0" x2="0" y2="1"><stop offset="0" stop-color="#5f9fd8"/><stop offset="1" stop-color="#dff0fc"/></linearGradient>
<linearGradient id="pc" x1="0" y1="0" x2="1" y2="1"><stop offset="0" stop-color="#f8e060"/><stop offset="1" stop-color="#c8a020"/></linearGradient></defs>
<!-- |< gray K -->
<path d="M935.8 92.5 H941.2 V101.2 L952 92.5 L957.5 97.2 L947.8 104 L957.5 110.8 L952 115.5 L941.2 106.8 V115.5 H935.8 Z" fill="#9e9e9e" stroke="#9e9e9e" stroke-width="1.2" stroke-linejoin="round"/>
<!-- < gray -->
<path d="M974.6 104 L985.3 92.6 L989.2 96.4 L982 104 L989.2 111.6 L985.3 115.4 Z" fill="#a0a0a0" stroke="#a0a0a0" stroke-width="1.4" stroke-linejoin="round"/>
<!-- > blue -->
<path d="M1025.6 104 L1014.3 92.3 L1010.2 96.3 L1018 104 L1010.2 111.7 L1014.3 115.7 Z" fill="url(#bl)" stroke="#0f3f70" stroke-width="1" stroke-linejoin="miter"/>
<!-- >| blue -->
<path d="M1057 103.7 L1046.4 92.6 L1042.4 96.6 L1049.5 103.7 L1042.4 111.1 L1046.4 115.2 Z" fill="url(#bl)" stroke="#0f3f70" stroke-width="1"/>
<rect x="1058.6" y="92.6" width="6" height="22.8" rx="1" fill="url(#blb)" stroke="#0f3f70" stroke-width="1"/>
<!-- calendar magnifier -->
<rect x="1078.5" y="94.5" width="22.8" height="19" rx="1" fill="#c8d4de" stroke="#6a7a88" stroke-width="1"/>
<rect x="1079" y="95" width="21.8" height="2" fill="#7a8a98"/>
<g fill="#ffffff"><rect x="1080.5" y="98.5" width="2" height="2"/><rect x="1083.5" y="98.5" width="2" height="2"/><rect x="1086.5" y="98.5" width="2" height="2"/><rect x="1089.5" y="98.5" width="2" height="2"/><rect x="1092.5" y="98.5" width="2" height="2"/><rect x="1095.5" y="98.5" width="2" height="2"/>
<rect x="1080.5" y="101.5" width="2" height="2"/><rect x="1083.5" y="101.5" width="2" height="2"/><rect x="1086.5" y="101.5" width="2" height="2"/><rect x="1089.5" y="101.5" width="2" height="2"/><rect x="1095.5" y="101.5" width="2" height="2"/>
<rect x="1080.5" y="104.5" width="2" height="2"/><rect x="1083.5" y="104.5" width="2" height="2"/><rect x="1086.5" y="104.5" width="2" height="2"/>
<rect x="1080.5" y="107.5" width="2" height="2"/><rect x="1083.5" y="107.5" width="2" height="2"/><rect x="1086.5" y="107.5" width="2" height="2"/>
<rect x="1080.5" y="110.5" width="2" height="2"/><rect x="1083.5" y="110.5" width="2" height="2"/></g>
<path d="M1096.5 110.5 L1100.8 115" stroke="#b08030" stroke-width="2" stroke-linecap="round"/>
<circle cx="1093.5" cy="107.3" r="4.1" fill="#dfeefa" stroke="#2a343c" stroke-width="1.3"/>
<!-- triangle + pencil -->
<path d="M1114 106.1 L1129.1 94.4 L1137.5 113 Z" fill="#d9dee3" stroke="#6e767d" stroke-width="1"/>
<path d="M1120 101 A9 9 0 0 1 1131 104" fill="none" stroke="#6aa0d0" stroke-width="0.9"/>
<path d="M1121.5 115 L1134.5 99.5 L1138 102.5 L1125 118 L1121 118.5 Z" fill="url(#pc)" stroke="#7a5a10" stroke-width="0.8"/>
<circle cx="1136.3" cy="100.6" r="2.2" fill="#e03a3a"/>
<!-- row 2 -->
<rect x="939.5" y="129.5" width="13.5" height="11" rx="1.5" fill="url(#wn)" stroke="#0f3f70" stroke-width="1.2"/>
<path d="M945.5 146.5 L955 136.5 L957.6 139 L948 148.5 L945 149 Z" fill="url(#pc)" stroke="#7a5a10" stroke-width="0.7"/>
<circle cx="956.5" cy="137.5" r="1.4" fill="#e04040"/>
<rect x="976.5" y="129.5" width="13.5" height="11" rx="1.5" fill="url(#wn)" stroke="#0f3f70" stroke-width="1.2"/>
<circle cx="989" cy="141.5" r="5.6" fill="#2c9a2a" stroke="#1a6a1a" stroke-width="0.8"/>
<path d="M986 141.5 l2.2 2.3 l3.8-4.3" stroke="#fff" stroke-width="1.6" fill="none"/>
<rect x="1011.5" y="129.5" width="13.5" height="11" rx="1.5" fill="url(#wn)" stroke="#0f3f70" stroke-width="1.2"/>
<path d="M1020.5 137.5 L1028 145.5 M1028 137.5 L1020.5 145.5" stroke="#e01818" stroke-width="2.6"/>
</svg>

<div class="a" style="left:927px;top:154px;width:227px;height:1px;background:#a0a0a0"></div>
<div class="grp" style="left:929px;top:162px;width:225px;height:39px"></div>
<div class="radio" style="left:936px;top:177px"></div><div class="a" style="left:939px;top:180px;width:7px;height:7px;border-radius:50%;background:#222"></div>
<div class="radio" style="left:1008px;top:177px"></div>
<div class="radio" style="left:1080px;top:177px"></div>
<div class="a" style="left:927px;top:202px;width:227px;height:1px;background:#a0a0a0"></div>

<div class="grp" style="left:939px;top:213px;width:196px;height:251px"></div>
<div class="chk" style="left:1043px;top:231px;border-color:#c5c5c5"></div>
<svg class="a" style="left:1043px;top:231px" width="13" height="13"><path d="M2.5 6.5l3 3l5-6" stroke="#c5c5c5" stroke-width="1.2" fill="none"/></svg>

<div class="inp d" style="left:1035px;top:252px;width:89px"><div class="sp"><i></i><i></i><b class="u"></b><b class="dn"></b></div></div>
<div class="inp d" style="left:1035px;top:279px;width:89px"><div class="sp"><i></i><i></i><b class="u"></b><b class="dn"></b></div></div>
<div class="inp d" style="left:1035px;top:306px;width:89px"><div class="sp"><i></i><i></i><b class="u"></b><b class="dn"></b></div></div>
<div class="inp" style="left:1035px;top:333px;width:89px;"><div class="a" style="left:1px;top:1px;width:68px;height:17px;background:#ffff00"></div><div class="a" style="left:69px;top:9px;width:18px;height:1px;background:#ffff00;z-index:2"></div><div class="sp"><i></i><i></i><b class="u"></b><b class="dn"></b></div></div>
<div class="inp d" style="left:1035px;top:360px;width:89px"><div class="sp"><i></i><i></i><b class="u"></b><b class="dn"></b></div></div>
<div class="chk" style="left:954px;top:391px;border-color:#c5c5c5"></div>
<div class="inp d" style="left:1035px;top:410px;width:89px"><div class="sp"><i></i><i></i><b class="u"></b><b class="dn"></b></div></div>
<div class="inp d" style="left:1035px;top:437px;width:89px"><div class="sp"><i></i><i></i><b class="u"></b><b class="dn"></b></div></div>

<div class="grp" style="left:940px;top:477px;width:196px;height:250px"></div>
<div class="btn" style="left:946px;top:496px;width:61px;height:23px;padding-left:16px"></div>
<svg class="a" style="left:957px;top:501px" width="12" height="12"><circle cx="6" cy="6" r="5" fill="#e02020"/><circle cx="4.5" cy="4.5" r="1.6" fill="#ff9090"/></svg>
<div class="btn hl" style="left:1009px;top:496px;width:61px;height:23px;padding-left:16px"></div>
<svg class="a" style="left:1020px;top:502px" width="11" height="11"><rect x="0.5" y="0.5" width="10" height="10" rx="1" fill="#d01818"/></svg>
<div class="btn" style="left:1071px;top:496px;width:61px;height:23px;padding-left:18px"></div>
<svg class="a" style="left:1079px;top:498px" width="18" height="18"><path d="M3 3L15 15M15 3L3 15" stroke="#c81010" stroke-width="4" stroke-linecap="round"/></svg>
<div class="grp" style="left:943px;top:564px;width:190px;height:155px"></div>
<div class="inp" style="left:946px;top:582px;width:87px"><div class="sp"><i></i><i></i><b class="u"></b><b class="dn"></b></div></div>
<div class="inp" style="left:1039px;top:582px;width:87px"><div class="sp"><i></i><i></i><b class="u"></b><b class="dn"></b></div></div>
<div class="inp" style="left:946px;top:609px;width:87px"><div class="sp"><i></i><i></i><b class="u"></b><b class="dn"></b></div></div>
<div class="inp" style="left:1039px;top:609px;width:87px"><div class="sp"><i></i><i></i><b class="u"></b><b class="dn"></b></div></div>
<div class="inp" style="left:946px;top:636px;width:87px"><div class="sp"><i></i><i></i><b class="u"></b><b class="dn"></b></div></div>
<div class="inp" style="left:1039px;top:636px;width:87px"><div class="sp"><i></i><i></i><b class="u"></b><b class="dn"></b></div></div>
<div class="inp" style="left:945px;top:663px;width:87px"><div class="sp"><i></i><i></i><b class="u"></b><b class="dn"></b></div></div>
<div class="inp" style="left:1039px;top:663px;width:87px"><div class="sp"><i></i><i></i><b class="u"></b><b class="dn"></b></div></div>
<div class="btn" style="left:1000px;top:691px;width:73px;height:23px"></div>
<div class="a" style="left:513px;top:93px;width:51px;height:3px;background:#f0f0f0"></div>
<div class="a" style="left:933px;top:161px;width:28px;height:3px;background:#f0f0f0"></div>
<div class="a" style="left:945px;top:212px;width:51px;height:3px;background:#f0f0f0"></div>
<div class="a" style="left:945px;top:476px;width:76px;height:3px;background:#f0f0f0"></div>
<div class="a" style="left:949px;top:563px;width:65px;height:3px;background:#f0f0f0"></div>
<div class="t" style="left:30px;top:8.0px;--tw:158.0px;transform:scaleX(0.8229);transform-origin:0 50%;">コンクリート打設数量予測システム</div>
<div class="t" style="left:195.6px;top:8.0px;--tw:31.7px;transform:scaleX(0.8482);transform-origin:0 50%;">Ver.1.1</div>
<div class="t" style="left:241px;top:8.0px;--tw:4.0px;transform:scaleX(1.0000);transform-origin:0 50%;">-</div>
<div class="t" style="left:364px;top:8.0px;--tw:25.5px;transform:scaleX(0.9102);transform-origin:0 50%;">.XML</div>
<div class="t" style="left:8.4px;top:33.0px;--tw:46.6px;transform:scaleX(0.7357);transform-origin:0 50%;">ファイル(<u>F</u>)</div>
<div class="t" style="left:70.7px;top:33.0px;--tw:59.0px;transform:scaleX(0.7628);transform-origin:0 50%;">オプション(<u>O</u>)</div>
<div class="t" style="left:145px;top:33.0px;--tw:45.0px;transform:scaleX(0.8543);transform-origin:0 50%;">ヘルプ(<u>H</u>)</div>
<div class="t" style="left:34.4px;top:62.5px;--tw:46.6px;transform:scaleX(0.9708);transform-origin:0 50%;">図面読込</div>
<div class="t" style="left:117.3px;top:62.5px;--tw:66.4px;transform:scaleX(0.7905);transform-origin:0 50%;">レイアウト変更</div>
<div class="t" style="left:221px;top:62.5px;--tw:46.8px;transform:scaleX(0.9750);transform-origin:0 50%;">背景読込</div>
<div class="t" style="left:317.3px;top:62.5px;--tw:51.7px;transform:scaleX(0.8617);transform-origin:0 50%;">移動モード</div>
<div class="t" style="left:384.7px;top:62.5px;--tw:76.8px;transform:scaleX(0.9143);transform-origin:0 50%;">頂点選択モード</div>
<div class="t" style="left:474.6px;top:62.5px;--tw:103.7px;transform:scaleX(0.7856);transform-origin:0 50%;">オブジェクト選択モード</div>
<div class="t" style="left:596.6px;top:62.5px;--tw:76.8px;transform:scaleX(0.9143);transform-origin:0 50%;">区画選択モード</div>
<div class="t" style="left:515px;top:88.0px;--tw:47.0px;transform:scaleX(0.9792);transform-origin:0 50%;">選択範囲</div>
<div class="t" style="left:522.6px;top:108.8px;--tw:37.4px;transform:scaleX(0.7792);transform-origin:0 50%;">梁スラブ</div>
<div class="t" style="left:596.6px;top:108.8px;--tw:38.9px;transform:scaleX(0.8972);transform-origin:0 50%;color:#1a1a5a">0.00 m3</div>
<div class="t" style="left:18px;top:134.0px;--tw:73.3px;transform:scaleX(0.8392);transform-origin:0 50%;">図面ファイル名:</div>
<div class="t" style="left:106.5px;top:134.0px;--tw:192.2px;transform:scaleX(0.9356);transform-origin:0 50%;color:#15153a">13階見上躯体読み取り図_200630.dwg</div>
<div class="t" style="left:608.3px;top:136.0px;--tw:71.7px;transform:scaleX(0.9958);transform-origin:0 50%;">打設対象表示</div>
<div class="t" style="left:720px;top:135.0px;--tw:59.8px;transform:scaleX(0.9967);transform-origin:0 50%;">図面再解析</div>
<div class="t" style="left:806px;top:135.0px;--tw:106.5px;transform:scaleX(0.9861);transform-origin:0 50%;">梁下部材の体積計算</div>
<div class="t" style="left:10.9px;top:164.0px;--tw:37.1px;transform:scaleX(0.9430);transform-origin:0 50%;">2D表示</div>
<div class="t" style="left:59.6px;top:162.5px;--tw:36.4px;transform:scaleX(0.9252);transform-origin:0 50%;">3D表示</div>
<div class="t" style="left:108.9px;top:164.0px;--tw:46.7px;transform:scaleX(0.9729);transform-origin:0 50%;">背景画像</div>
<div class="t" style="left:169px;top:164.0px;--tw:46.7px;transform:scaleX(0.9729);transform-origin:0 50%;">重畳表示</div>
<div class="t" style="left:229.5px;top:164.0px;--tw:46.5px;transform:scaleX(0.9688);transform-origin:0 50%;">領域編集</div>
<div class="t" style="left:935.4px;top:156.2px;--tw:23.6px;transform:scaleX(0.9833);transform-origin:0 50%;">表示</div>
<div class="t" style="left:952px;top:176.7px;--tw:23.0px;transform:scaleX(0.9583);transform-origin:0 50%;">図面</div>
<div class="t" style="left:1023.3px;top:176.7px;--tw:48.7px;transform:scaleX(0.8117);transform-origin:0 50%;">カメラ画像</div>
<div class="t" style="left:1095.4px;top:176.7px;--tw:47.2px;transform:scaleX(0.9833);transform-origin:0 50%;">重畳画像</div>
<div class="t" style="left:946.7px;top:207.0px;--tw:47.5px;transform:scaleX(0.9896);transform-origin:0 50%;">区画情報</div>
<div class="t" style="left:954.7px;top:228.1px;--tw:22.8px;transform:scaleX(0.8991);transform-origin:0 50%;color:#101050">No.1</div>
<div class="t" style="left:1059px;top:230.5px;--tw:47.5px;transform:scaleX(0.9896);transform-origin:0 50%;color:#6d6d6d">打設対象</div>
<div class="t" style="left:954.7px;top:255.2px;--tw:62.1px;transform:scaleX(0.8625);transform-origin:0 50%;">部材成・厚さ</div>
<div class="t" style="left:1038.3px;top:255.2px;--tw:46.1px;transform:scaleX(0.8640);transform-origin:0 50%;color:#6d6d6d">277.5 mm</div>
<div class="t" style="left:954.7px;top:281.8px;--tw:23.3px;transform:scaleX(0.9708);transform-origin:0 50%;">面積</div>
<div class="t" style="left:1037.7px;top:282.0px;--tw:59.3px;transform:scaleX(0.9512);transform-origin:0 50%;color:#6d6d6d">6.7016 m^2</div>
<div class="t" style="left:954.7px;top:309.0px;--tw:35.3px;transform:scaleX(0.9806);transform-origin:0 50%;">開口部</div>
<div class="t" style="left:1037.7px;top:309.0px;--tw:59.3px;transform:scaleX(0.9512);transform-origin:0 50%;color:#6d6d6d">0.0000 m^2</div>
<div class="t" style="left:954.7px;top:336.0px;--tw:23.3px;transform:scaleX(0.9708);transform-origin:0 50%;">体積</div>
<div class="t" style="left:1038.9px;top:336.0px;--tw:58.1px;transform:scaleX(0.9319);transform-origin:0 50%;">1.8597 m^3</div>
<div class="t" style="left:954.7px;top:363.0px;--tw:23.3px;transform:scaleX(0.9708);transform-origin:0 50%;">割合</div>
<div class="t" style="left:1038.9px;top:363.0px;--tw:43.5px;transform:scaleX(0.9182);transform-origin:0 50%;color:#6d6d6d">100.00%</div>
<div class="t" style="left:969.5px;top:389.2px;--tw:23.7px;transform:scaleX(0.9875);transform-origin:0 50%;color:#6d6d6d">梁下</div>
<div class="t" style="left:954.7px;top:412.6px;--tw:69.6px;transform:scaleX(0.9667);transform-origin:0 50%;">梁下の部材成</div>
<div class="t" style="left:1037.7px;top:413.0px;--tw:34.7px;transform:scaleX(0.8672);transform-origin:0 50%;color:#6d6d6d">0.0 mm</div>
<div class="t" style="left:954.7px;top:440.0px;--tw:66.6px;transform:scaleX(0.9250);transform-origin:0 50%;">階下の床高さ</div>
<div class="t" style="left:1037.7px;top:440.0px;--tw:34.7px;transform:scaleX(0.8672);transform-origin:0 50%;color:#6d6d6d">0.0 mm</div>
<div class="t" style="left:947.5px;top:471.0px;--tw:71.7px;transform:scaleX(0.8536);transform-origin:0 50%;">マーカーの設定</div>
<div class="t" style="left:974.7px;top:500.7px;--tw:23.5px;transform:scaleX(0.9792);transform-origin:0 50%;">追加</div>
<div class="t" style="left:1037.3px;top:500.7px;--tw:24.1px;transform:scaleX(1.0042);transform-origin:0 50%;">終了</div>
<div class="t" style="left:1099.5px;top:500.7px;--tw:24.0px;transform:scaleX(1.0000);transform-origin:0 50%;">削除</div>
<div class="t" style="left:955.5px;top:526.2px;--tw:160.0px;transform:scaleX(0.9524);transform-origin:0 50%;">左上→左下→右下→右上の順に</div>
<div class="t" style="left:955.5px;top:539.2px;--tw:131.9px;transform:scaleX(0.7328);transform-origin:0 50%;">画像上をクリックしてください。</div>
<div class="t" style="left:950.7px;top:557.3px;--tw:61.5px;transform:scaleX(0.8542);transform-origin:0 50%;">図面マーカー</div>
<div class="t" style="left:948.7px;top:585.0px;--tw:45.5px;transform:scaleX(0.9089);transform-origin:0 50%;">306.7956</div>
<div class="t" style="left:1042.3px;top:585.0px;--tw:56.7px;transform:scaleX(0.8942);transform-origin:0 50%;">13571.4390</div>
<div class="t" style="left:948.7px;top:612.1px;--tw:45.5px;transform:scaleX(0.9089);transform-origin:0 50%;">306.7956</div>
<div class="t" style="left:1041.7px;top:612.1px;--tw:51.7px;transform:scaleX(0.9113);transform-origin:0 50%;">6628.2045</div>
<div class="t" style="left:949.5px;top:639.2px;--tw:56.7px;transform:scaleX(0.8942);transform-origin:0 50%;">12784.4920</div>
<div class="t" style="left:1041.7px;top:639.2px;--tw:51.7px;transform:scaleX(0.9113);transform-origin:0 50%;">6477.2647</div>
<div class="t" style="left:948.7px;top:666.3px;--tw:56.5px;transform:scaleX(0.8911);transform-origin:0 50%;">12583.2390</div>
<div class="t" style="left:1042.3px;top:666.3px;--tw:56.7px;transform:scaleX(0.8942);transform-origin:0 50%;">13672.0650</div>
<div class="t" style="left:1023.7px;top:695.3px;--tw:23.6px;transform:scaleX(0.9833);transform-origin:0 50%;">変更</div>
<div class="t" style="left:46.7px;top:745.0px;--tw:47.3px;transform:scaleX(0.9854);transform-origin:0 50%;">背景撮影</div>
<div class="t" style="left:138.3px;top:745.0px;--tw:46.7px;transform:scaleX(0.9729);transform-origin:0 50%;">打設開始</div>
<div class="t" style="left:228.9px;top:745.0px;--tw:47.7px;transform:scaleX(0.9938);transform-origin:0 50%;">打設終了</div>
<div class="t" style="left:46.7px;top:776.0px;--tw:47.3px;transform:scaleX(0.9854);transform-origin:0 50%;color:#8a8a8a">計算実行</div>
<div class="t" style="left:138.3px;top:776.0px;--tw:47.4px;transform:scaleX(0.9875);transform-origin:0 50%;color:#8a8a8a">手動取得</div>
<div class="t" style="left:230px;top:776.0px;--tw:46.6px;transform:scaleX(0.9708);transform-origin:0 50%;color:#8a8a8a">手動計算</div>
<div class="t" style="left:4.1px;top:804.4px;--tw:59.2px;transform:scaleX(0.9867);transform-origin:0 50%;">解析停止中</div>
<div class="t" style="left:402.3px;top:754.7px;--tw:109.7px;transform:scaleX(0.8311);transform-origin:0 50%;">コンクリート打設済数量</div>
<div class="t" style="left:402.3px;top:773.3px;--tw:98.0px;transform:scaleX(0.8167);transform-origin:0 50%;">コンクリート打設残量</div>
<div class="t" style="left:544.7px;top:754.7px;--tw:58.3px;transform:scaleX(1.0158);transform-origin:0 50%;font-weight:bold">0.0000 m3</div>
<div class="t" style="left:530.7px;top:773.3px;--tw:72.3px;transform:scaleX(1.0221);transform-origin:0 50%;font-weight:bold;color:#1c1cdc">229.0535 m3</div>
<div class="t" style="left:751px;top:778.0px;--tw:28.0px;transform:scaleX(0.9120);transform-origin:0 50%;color:#e0e080">100%</div>
<div class="t" style="left:982.4px;top:743.7px;--tw:61.6px;transform:scaleX(0.8556);transform-origin:0 50%;">梁スラブ体積</div>
<div class="t" style="left:982.4px;top:762.6px;--tw:48.0px;transform:scaleX(1.0000);transform-origin:0 50%;">梁下体積</div>
<div class="t" style="left:982.4px;top:781.5px;--tw:35.0px;transform:scaleX(0.9722);transform-origin:0 50%;">総合計</div>
<div class="t" style="left:1060.3px;top:743.7px;--tw:72.0px;transform:scaleX(1.0179);transform-origin:0 50%;font-weight:bold">228.2569 m3</div>
<div class="t" style="left:1067.1px;top:762.6px;--tw:65.2px;transform:scaleX(1.0178);transform-origin:0 50%;font-weight:bold">80.0329 m3</div>
<div class="t" style="left:1060.3px;top:781.5px;--tw:72.0px;transform:scaleX(1.0179);transform-origin:0 50%;font-weight:bold">308.2898 m3</div>
</body></html>
